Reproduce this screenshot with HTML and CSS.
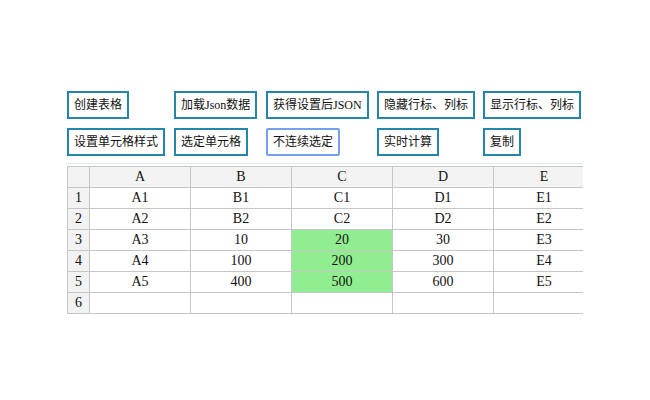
FILE: index.html
```html
<!DOCTYPE html>
<html lang="zh">
<head>
    <meta charset="UTF-8">
    <title>表格</title>
    <link rel="stylesheet" href="styles.css">
</head>
<body>
    <div id="container">
        <div id="tools">
            <div class="cell"><button>创建表格</button></div>
            <div class="cell"><button>加载Json数据</button></div>
            <div class="cell"><button>获得设置后JSON</button></div>
            <div class="cell"><button>隐藏行标、列标</button></div>
            <div class="cell"><button>显示行标、列标</button></div>
            <div class="cell"><button>设置单元格样式</button></div>
            <div class="cell"><button>选定单元格</button></div>
            <div class="cell"><button class="focus">不连续选定</button></div>
            <div class="cell"><button>实时计算</button></div>
            <div class="cell"><button>复制</button></div>
        </div>
        <div id="sheet">
            <table>
                <tr class="head">
                    <th class="corner"></th><th>A</th><th>B</th><th>C</th><th>D</th><th>E</th>
                </tr>
                <tr><th>1</th><td>A1</td><td>B1</td><td>C1</td><td>D1</td><td>E1</td></tr>
                <tr><th>2</th><td>A2</td><td>B2</td><td>C2</td><td>D2</td><td>E2</td></tr>
                <tr><th>3</th><td>A3</td><td>10</td><td class="on">20</td><td>30</td><td>E3</td></tr>
                <tr><th>4</th><td>A4</td><td>100</td><td class="on">200</td><td>300</td><td>E4</td></tr>
                <tr><th>5</th><td>A5</td><td>400</td><td class="on">500</td><td>600</td><td>E5</td></tr>
                <tr><th>6</th><td></td><td></td><td></td><td></td><td></td></tr>
            </table>
        </div>
    </div>
</body>
</html>
```

FILE: styles.css
```css
*{
    margin: 0;
    padding: 0;
    box-sizing: border-box;
}
body{
    background: #fff;
    font-family: "Liberation Serif", "Noto Sans CJK SC", serif;
    color: #111;
}
#container{
    padding: 91px 0 0 66px;
}
#tools{
    display: grid;
    grid-template-columns: 107px 92px 111px 106px 110px;
    row-gap: 9px;
    padding-left: 1px;
}
#tools button{
    height: 28px;
    padding: 0 5px;
    border: 2px solid #2486ad;
    background: #fff;
    font-family: "Liberation Serif", "Noto Sans CJK SC", serif;
    font-size: 12px;
    line-height: 24px;
    color: #111;
    cursor: pointer;
}
#tools button.focus{
    border-color: #72a2ea;
    border-radius: 2px;
}
#sheet{
    width: 517px;
    margin-top: 7px;
    padding: 2px 0 0 1px;
    border-top: 1px solid #d8ebf6;
    overflow: hidden;
}
table{
    border-collapse: separate;
    border-spacing: 0;
    table-layout: fixed;
    width: 528px;
    border-top: 1px solid #c6c6c6;
    border-left: 1px solid #c6c6c6;
}
th, td{
    width: 101px;
    height: 21px;
    border-right: 1px solid #c6c6c6;
    border-bottom: 1px solid #c6c6c6;
    font-size: 14px;
    font-weight: normal;
    line-height: 20px;
    text-align: center;
    white-space: nowrap;
}
th{
    background: #f3f3f3;
}
tr th:first-child{
    width: 22px;
}
td.on{
    background: #90ee90;
}
```
